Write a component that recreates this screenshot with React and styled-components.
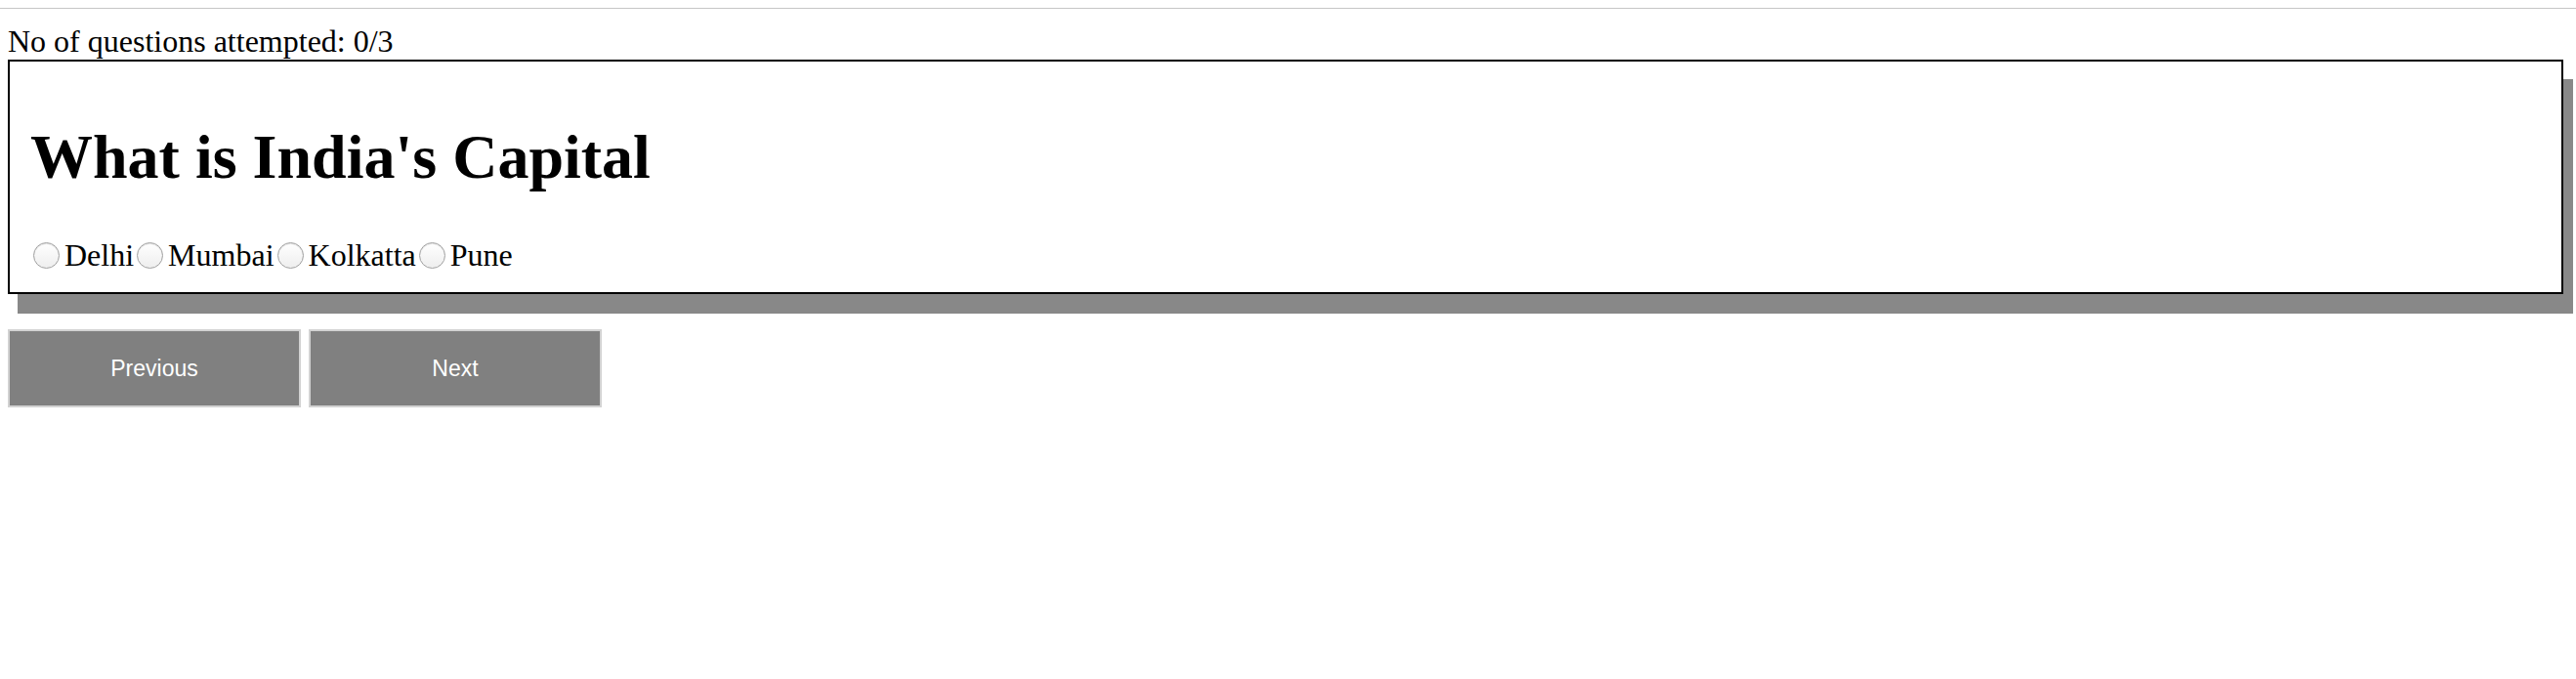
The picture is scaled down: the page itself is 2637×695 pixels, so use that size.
import React, { useState } from "react";
import styled, { createGlobalStyle } from "styled-components";

const GlobalStyle = createGlobalStyle`
  body {
    margin: 0;
    background: #fff;
    font-family: "Liberation Serif", "Times New Roman", serif;
    color: #000;
  }
`;

const Page = styled.div`
  display: flex;
  flex-direction: column;
  padding: 8px 13px 0 8px;
`;

const TopRule = styled.div`
  height: 1px;
  background: #c6c6c6;
  margin: 0 -13px 0 -8px;
`;

const Counter = styled.div`
  font-size: 32px;
  line-height: 38px;
  margin-top: 14px;
`;

const QuestionCard = styled.div`
  border: 2px solid #000;
  padding: 21px 21px 19px;
  box-shadow: 10px 20px 0 #888;
  background: #fff;
`;

const Question = styled.h1`
  font-size: 64px;
  font-weight: bold;
  margin: 40px 0 45px;
`;

const Options = styled.div`
  display: flex;
  align-items: center;
  font-size: 32px;
  line-height: 37px;
`;

const Option = styled.label`
  display: flex;
  align-items: center;
`;

const Radio = styled.input.attrs({ type: "radio" })`
  appearance: none;
  width: 27px;
  height: 27px;
  margin: 0 5px 0 3px;
  border-radius: 50%;
  border: 1.5px solid #a0a0a0;
  background: linear-gradient(#ffffff, #eeeeee);
  box-shadow: inset 0 1px 1px rgba(0, 0, 0, 0.12);
  &:checked {
    background: radial-gradient(#333 30%, #fff 36%);
  }
`;

const Nav = styled.div`
  display: flex;
  gap: 8px;
  margin-top: 36px;
`;

const NavButton = styled.button`
  width: 300px;
  height: 80px;
  background: #808080;
  border: 2px solid #d2d2d2;
  color: #fff;
  font-family: "Liberation Sans", Arial, sans-serif;
  font-size: 23px;
  cursor: pointer;
`;

const questions = [
  { text: "What is India's Capital", options: ["Delhi", "Mumbai", "Kolkatta", "Pune"] },
  { text: "What is the Capital of Japan", options: ["Tokyo", "Osaka", "Kyoto", "Nagoya"] },
  { text: "What is the Capital of France", options: ["Paris", "Lyon", "Nice", "Lille"] },
];

export default function App() {
  const [current, setCurrent] = useState(0);
  const [answers, setAnswers] = useState({});
  const q = questions[current];

  return (
    <>
      <GlobalStyle />
      <Page>
        <TopRule />
        <Counter>
          No of questions attempted: {Object.keys(answers).length}/{questions.length}
        </Counter>
        <QuestionCard>
          <Question>{q.text}</Question>
          <Options>
            {q.options.map((opt) => (
              <Option key={opt}>
                <Radio
                  name={"q" + current}
                  checked={answers[current] === opt}
                  onChange={() => setAnswers({ ...answers, [current]: opt })}
                />
                {opt}
              </Option>
            ))}
          </Options>
        </QuestionCard>
        <Nav>
          <NavButton onClick={() => setCurrent(Math.max(0, current - 1))}>Previous</NavButton>
          <NavButton onClick={() => setCurrent(Math.min(questions.length - 1, current + 1))}>Next</NavButton>
        </Nav>
      </Page>
    </>
  );
}
